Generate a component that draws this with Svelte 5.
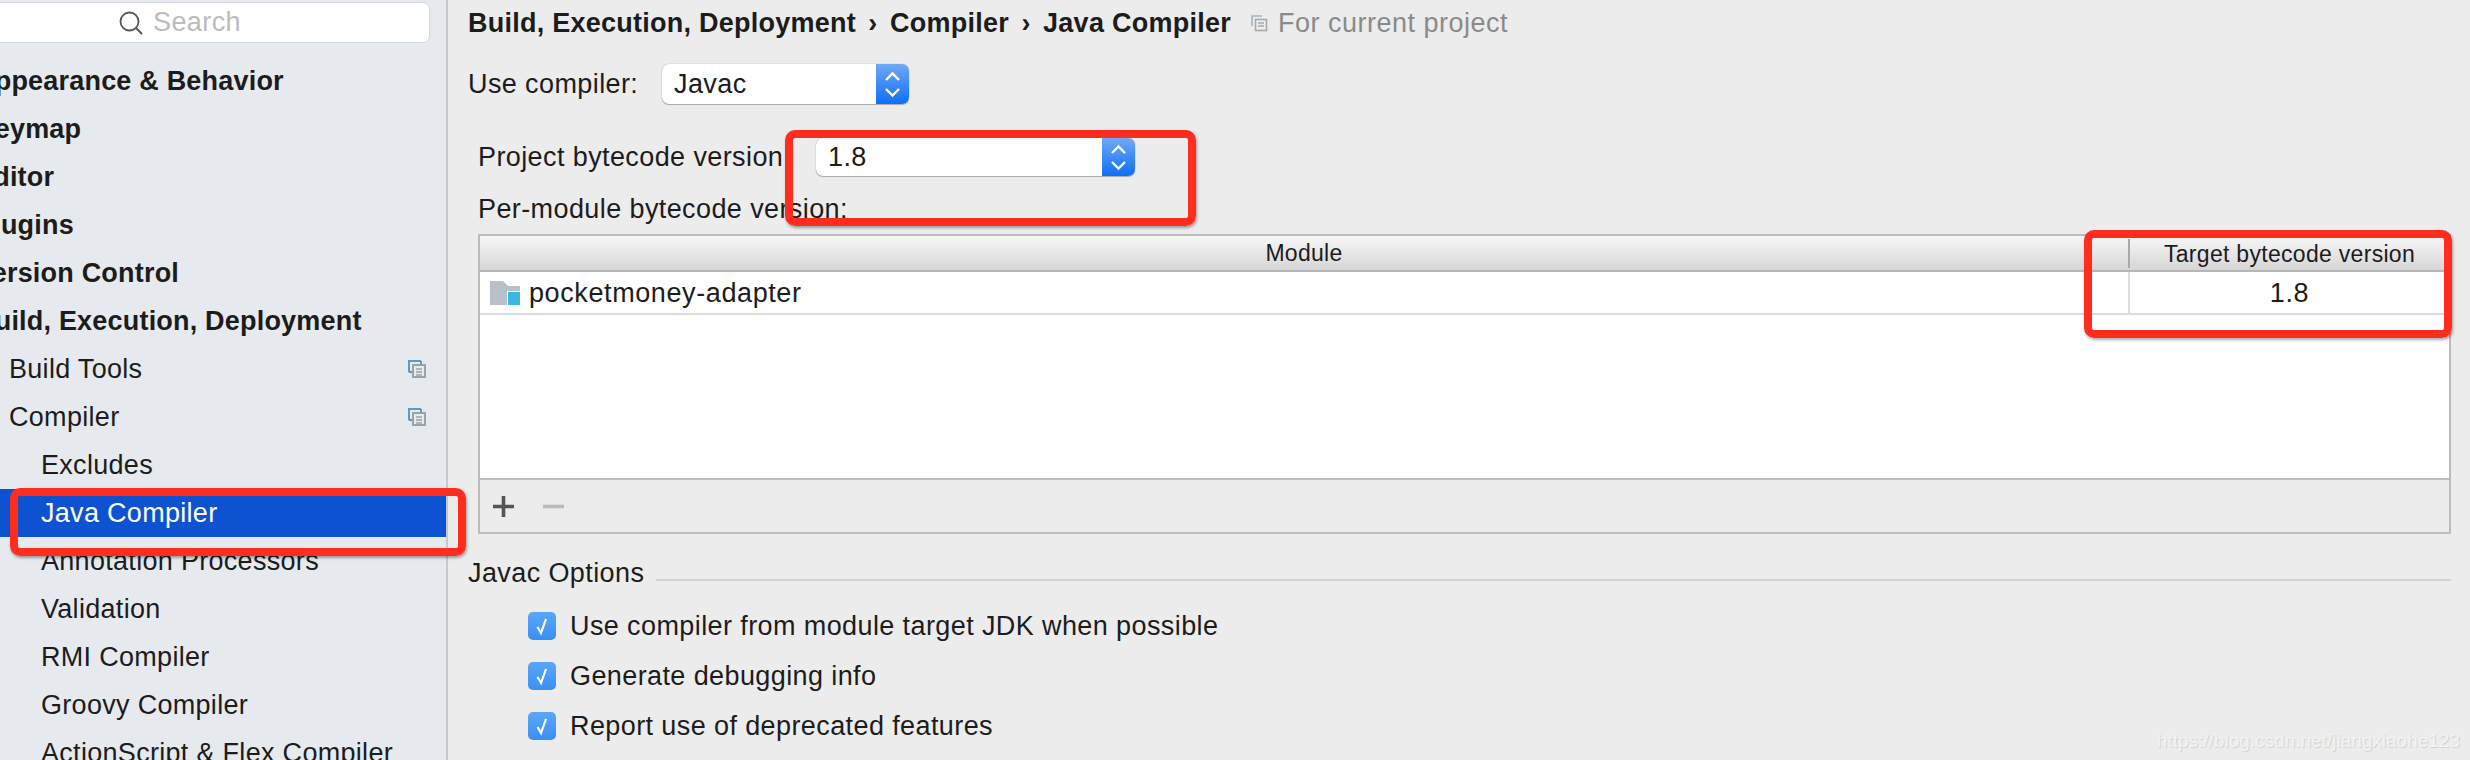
<script>
  const tree = [
    { label: 'Appearance & Behavior', level: 0 },
    { label: 'Keymap', level: 0 },
    { label: 'Editor', level: 0 },
    { label: 'Plugins', level: 0 },
    { label: 'Version Control', level: 0 },
    { label: 'Build, Execution, Deployment', level: 0 },
    { label: 'Build Tools', level: 1, copy: true },
    { label: 'Compiler', level: 1, copy: true },
    { label: 'Excludes', level: 2 },
    { label: 'Java Compiler', level: 2, selected: true },
    { label: 'Annotation Processors', level: 2 },
    { label: 'Validation', level: 2 },
    { label: 'RMI Compiler', level: 2 },
    { label: 'Groovy Compiler', level: 2 },
    { label: 'ActionScript & Flex Compiler', level: 2 }
  ];
  const options = [
    'Use compiler from module target JDK when possible',
    'Generate debugging info',
    'Report use of deprecated features'
  ];
</script>

{#snippet copyIcon(cls)}
  <svg class={cls} viewBox="0 0 18 18" width="18" height="18">
    <path d="M1 12V1h12" fill="none" stroke="#5b9ac4" stroke-width="2" />
    <path d="M1 12h3M13 1v3" fill="none" stroke="#5b9ac4" stroke-width="2" />
    <rect x="5" y="5" width="12" height="12" fill="#e6eaef" stroke="#9aa3ab" stroke-width="2" />
    <path d="M8 9h6M8 12h6M8 15h6" stroke="#9aa3ab" stroke-width="1.4" />
  </svg>
{/snippet}

{#snippet stepper()}
  <span class="stepper">
    <svg viewBox="0 0 33 38" width="33" height="38">
      <path d="M10 15l6.5-6.5L23 15M10 24l6.5 6.5L23 24" fill="none" stroke="#fff" stroke-width="2.4" />
    </svg>
  </span>
{/snippet}

<div class="window">
  <aside class="sidebar">
    <div class="search">
      <svg viewBox="0 0 24 24" width="24" height="24">
        <circle cx="10.5" cy="10.5" r="9" fill="none" stroke="#555" stroke-width="1.8" />
        <path d="M17 17l6 6" stroke="#555" stroke-width="2" />
      </svg>
      <span>Search</span>
    </div>
    <ul class="tree">
      {#each tree as item}
        <li class="row lvl{item.level}" class:selected={item.selected}>
          <span>{item.label}</span>
          {#if item.copy}{@render copyIcon('row-icon')}{/if}
        </li>
      {/each}
    </ul>
  </aside>

  <main class="content">
    <div class="crumbs">
      <b>Build, Execution, Deployment</b>
      <i class="sep">›</i>
      <b>Compiler</b>
      <i class="sep">›</i>
      <b>Java Compiler</b>
      <svg class="scope-icon" viewBox="0 0 18 18" width="18" height="18">
        <path d="M2 12V2h10" fill="none" stroke="#9fb4c4" stroke-width="1.6" />
        <rect x="5.5" y="5.5" width="11" height="11" fill="none" stroke="#a8a8a8" stroke-width="1.6" />
        <path d="M8 9h6M8 12h6" stroke="#a8a8a8" stroke-width="1.3" />
      </svg>
      <span class="scope">For current project</span>
    </div>

    <div class="compiler-row">
      <label for="compiler">Use compiler:</label>
      <div class="combo compiler" id="compiler">
        <span>Javac</span>
        {@render stepper()}
      </div>
    </div>

    <div class="bytecode-row">
      <span class="bytecode-label">Project bytecode version</span>
      <div class="combo bytecode">
        <span>1.8</span>
        {@render stepper()}
      </div>
    </div>

    <div class="per-module">Per-module bytecode version:</div>

    <div class="table">
      <div class="thead">
        <div class="th module">Module</div>
        <div class="th target">Target bytecode version</div>
      </div>
      <div class="tr">
        <div class="td module">
          <svg viewBox="0 0 30 24" width="30" height="24">
            <path d="M0 0h13l5 5h12v19H0z" fill="#b8c1ca" />
            <rect x="17" y="10" width="14" height="15" fill="#fff" />
            <rect x="18" y="11" width="12" height="13" fill="#3db8e6" />
          </svg>
          <span>pocketmoney-adapter</span>
        </div>
        <div class="td target">1.8</div>
      </div>
      <div class="tbody-rest"></div>
      <div class="toolbar">
        <svg viewBox="0 0 21 21" width="21" height="21"><path d="M10.5 0v21M0 10.5h21" stroke="#555" stroke-width="3.6" /></svg>
        <svg viewBox="0 0 21 21" width="21" height="21"><path d="M0 10.5h21" stroke="#bbb" stroke-width="3.6" /></svg>
      </div>
    </div>

    <div class="group-title">
      <span>Javac Options</span>
      <hr />
    </div>

    <div class="options">
      {#each options as opt}
        <div class="option">
          <span class="check">
            <svg viewBox="0 0 28 28" width="28" height="28">
              <path d="M9.5 15l3.5 6 5-14" fill="none" stroke="#fff" stroke-width="2.2" />
            </svg>
          </span>
          <span>{opt}</span>
        </div>
      {/each}
    </div>
  </main>

  <!-- annotations drawn on top of the screenshot -->
  <div class="mark mark-tree"></div>
  <div class="mark mark-combo"></div>
  <div class="mark mark-column"></div>
  <div class="watermark">https://blog.csdn.net/jiangxiaohe123</div>
</div>

<style>
  :global(body) {
    margin: 0;
  }

  .window {
    position: relative;
    display: flex;
    width: 2470px;
    height: 760px;
    overflow: hidden;
    background: #ececec;
    color: #1c1c1c;
    font-family: "Liberation Sans", Arial, sans-serif;
    font-size: 27px;
    letter-spacing: 0.4px;
  }

  .sidebar {
    flex: none;
    width: 446px;
    background: #e6eaef;
    border-right: 2px solid #c6c8ca;
    overflow: hidden;
  }

  .search {
    display: flex;
    align-items: center;
    gap: 10px;
    box-sizing: border-box;
    width: 440px;
    height: 41px;
    margin: 2px 0 0 -10px;
    padding-left: 128px;
    background: #fff;
    border: 1px solid #d3d6da;
    border-radius: 7px;
    color: #bcbcbc;
  }

  .tree {
    list-style: none;
    margin: 14px 0 0;
    padding: 0;
  }

  .row {
    display: flex;
    align-items: center;
    justify-content: space-between;
    height: 48px;
    padding-right: 20px;
    white-space: nowrap;
    letter-spacing: 0.3px;
  }

  .lvl0 {
    padding-left: 0;
    font-weight: 700;
    letter-spacing: 0.2px;
    text-indent: -25px;
  }

  .lvl1 {
    padding-left: 9px;
  }

  .lvl2 {
    padding-left: 41px;
  }

  .selected {
    background: #0d52d1;
    color: #fff;
  }

  .content {
    flex: 1;
    min-width: 0;
    padding-left: 20px;
    padding-right: 19px;
  }

  .crumbs {
    display: flex;
    align-items: center;
    height: 46px;
    white-space: nowrap;
  }

  .crumbs b {
    letter-spacing: 0.25px;
  }

  .sep {
    width: 34px;
    text-align: center;
    font-style: normal;
    font-weight: 700;
  }

  .scope-icon {
    margin-left: 19px;
  }

  .scope {
    margin-left: 10px;
    color: #8a8a8a;
    letter-spacing: 0.5px;
  }

  .compiler-row {
    display: flex;
    align-items: center;
    margin-top: 18px;
  }

  .compiler-row label {
    width: 194px;
  }

  .combo {
    display: flex;
    align-items: center;
    justify-content: space-between;
    box-sizing: border-box;
    padding-left: 12px;
    background: #fff;
    border-radius: 7px;
    box-shadow: 0 0 1px rgba(0, 0, 0, 0.45), 0 1px 1px rgba(0, 0, 0, 0.25);
    overflow: hidden;
  }

  .compiler {
    width: 247px;
    height: 40px;
  }

  .bytecode {
    width: 319px;
    height: 38px;
  }

  .stepper {
    display: flex;
    align-items: center;
    justify-content: center;
    width: 33px;
    align-self: stretch;
    background: linear-gradient(#6fa8f7, #0f6ff5);
  }

  .bytecode-row {
    display: flex;
    align-items: center;
    margin-top: 34px;
    padding-left: 10px;
  }

  .bytecode-label {
    width: 338px;
    white-space: nowrap;
  }

  .per-module {
    display: flex;
    align-items: center;
    height: 40px;
    margin-top: 13px;
    padding-left: 10px;
  }

  .table {
    display: flex;
    flex-direction: column;
    box-sizing: border-box;
    height: 300px;
    margin: 5px 0 0 10px;
    border: 2px solid #bcbcbc;
    background: #fff;
  }

  .thead {
    display: flex;
    flex: none;
    height: 34px;
    background: linear-gradient(#f7f7f7, #d6d6d6);
    border-bottom: 2px solid #b6b6b6;
    font-size: 23px;
    letter-spacing: 0.3px;
  }

  .th {
    display: flex;
    align-items: center;
    justify-content: center;
    padding-top: 1px;
  }

  .th.module,
  .td.module {
    width: 1648px;
    flex: none;
  }

  .th.target {
    flex: 1;
    border-left: 2px solid #a8a8a8;
    margin: 3px 0 2px;
  }

  .tr {
    display: flex;
    flex: none;
    height: 41px;
    border-bottom: 2px solid #dcdcdc;
    letter-spacing: 0.6px;
  }

  .td {
    display: flex;
    align-items: center;
    padding-top: 1px;
  }

  .td.module {
    gap: 9px;
    padding-left: 10px;
    box-sizing: border-box;
  }

  .td.target {
    flex: 1;
    justify-content: center;
    border-left: 2px solid #dcdcdc;
  }

  .tbody-rest {
    flex: 1;
  }

  .toolbar {
    display: flex;
    align-items: center;
    gap: 29px;
    flex: none;
    box-sizing: border-box;
    height: 54px;
    padding-left: 13px;
    background: #ececec;
    border-top: 2px solid #bcbcbc;
  }

  .group-title {
    display: flex;
    align-items: center;
    gap: 12px;
    height: 30px;
    margin-top: 24px;
  }

  .group-title hr {
    flex: 1;
    height: 2px;
    margin: 14px 0 0;
    border: 0;
    background: #d2d2d2;
  }

  .options {
    display: flex;
    flex-direction: column;
    gap: 22px;
    margin-top: 24px;
    padding-left: 60px;
  }

  .option {
    display: flex;
    align-items: center;
    gap: 14px;
    height: 28px;
  }

  .check {
    display: flex;
    width: 28px;
    height: 28px;
    border-radius: 5px;
    background: linear-gradient(#5aa6f8, #3b8ff3);
  }

  .mark {
    position: absolute;
    box-sizing: border-box;
    border: 8px solid #ff2d1e;
    border-radius: 10px;
    box-shadow: 1px 2px 3px rgba(0, 0, 0, 0.35);
  }

  .mark-tree {
    left: 10px;
    top: 488px;
    width: 456px;
    height: 68px;
  }

  .mark-combo {
    left: 785px;
    top: 130px;
    width: 411px;
    height: 96px;
  }

  .mark-column {
    left: 2084px;
    top: 230px;
    width: 368px;
    height: 108px;
  }

  .watermark {
    position: absolute;
    right: 10px;
    top: 730px;
    font-size: 19px;
    letter-spacing: 0;
    color: #f3f3f3;
    text-shadow: 1px 1px 1px rgba(0, 0, 0, 0.12);
  }
</style>
